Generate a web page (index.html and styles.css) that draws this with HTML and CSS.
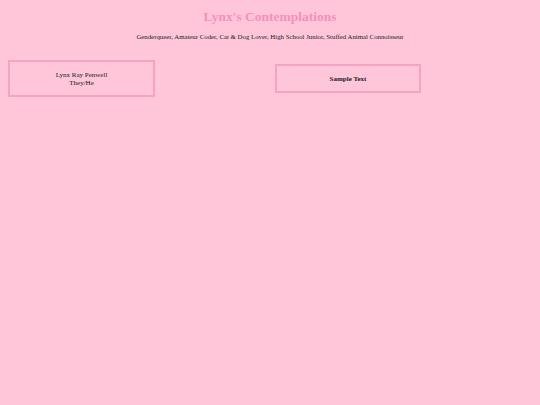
FILE: index.html
```html
<!DOCTYPE html>
<html>
<head>
<meta charset="utf-8">
<link rel="stylesheet" href="styles.css">
</head>
<body>
<header class="header">
  <h1 class="title">Lynx's Contemplations</h1>
  <p class="subtitle">Genderqueer, Amateur Coder, Cat &amp; Dog Lover, High School Junior, Stuffed Animal Connoisseur</p>
</header>
<main class="row">
  <div class="card">Lynx Ray Penwell<br>They/He</div>
  <div class="card card-bold">Sample Text</div>
</main>
</body>
</html>
```

FILE: styles.css
```css
html, body {
  background: #ffc6da;
}
body {
  margin: 8px;
  font-family: "Liberation Serif", "Times New Roman", serif;
  color: #1a1a1a;
}
.header {
  text-align: center;
}
.title {
  margin: 0;
  font-size: 13.5px;
  font-weight: bold;
  color: #f690ba;
  line-height: 17px;
}
.subtitle {
  margin: 8px 0 0;
  font-size: 6.8px;
  line-height: 8px;
}
.row {
  display: flex;
  align-items: center;
  gap: 120px;
  margin-top: 19px;
}
.card {
  box-sizing: border-box;
  width: 147px;
  border: 2px solid #f6a2c2;
  padding: 8.5px 4px;
  text-align: center;
  font-size: 7px;
  line-height: 8px;
}
.card-bold {
  width: 146px;
  font-weight: bold;
}
```
